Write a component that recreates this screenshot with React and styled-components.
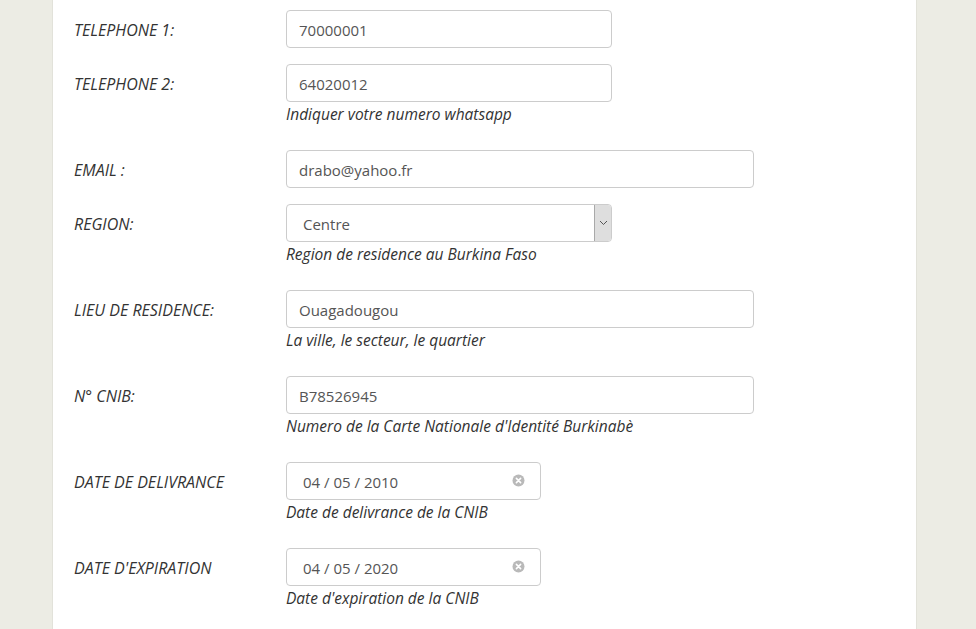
import styled, { createGlobalStyle } from "styled-components";

const GlobalStyle = createGlobalStyle`
  html, body {
    margin: 0;
    padding: 0;
    background: #ecece4;
    font-family: "Open Sans", "Noto Sans", sans-serif;
    font-size: 15px;
    color: #333;
  }
`;

const fields = [
  { label: "TELEPHONE 1:", value: "70000001", width: 326 },
  { label: "TELEPHONE 2:", value: "64020012", width: 326, help: "Indiquer votre numero whatsapp" },
  { label: "EMAIL :", value: "drabo@yahoo.fr", width: 468 },
  { label: "REGION:", value: "Centre", width: 326, kind: "select", help: "Region de residence au Burkina Faso" },
  { label: "LIEU DE RESIDENCE:", value: "Ouagadougou", width: 468, help: "La ville, le secteur, le quartier" },
  { label: "N° CNIB:", value: "B78526945", width: 468, help: "Numero de la Carte Nationale d'Identité Burkinabè" },
  { label: "DATE DE DELIVRANCE", value: "04 / 05 / 2010", width: 255, kind: "date", help: "Date de delivrance de la CNIB" },
  { label: "DATE D'EXPIRATION", value: "04 / 05 / 2020", width: 255, kind: "date", help: "Date d'expiration de la CNIB" },
];

function ClearIcon() {
  return (
    <svg width="13" height="13" viewBox="0 0 13 13">
      <circle cx="6.5" cy="6.5" r="6" fill="#b9b9b9" />
      <path d="M4.4 4.4 L8.6 8.6 M8.6 4.4 L4.4 8.6" stroke="#fff" strokeWidth="1.6" strokeLinecap="round" />
    </svg>
  );
}

function Chevron() {
  return (
    <svg width="9" height="6" viewBox="0 0 9 6">
      <path d="M1 1 L4.5 4.5 L8 1" fill="none" stroke="#555" strokeWidth="1" />
    </svg>
  );
}

function Control({ field }) {
  if (field.kind === "select") {
    return (
      <SelectBox $width={field.width}>
        <SelectText>{field.value}</SelectText>
        <ArrowButton>
          <Chevron />
        </ArrowButton>
      </SelectBox>
    );
  }
  if (field.kind === "date") {
    return (
      <DateBox $width={field.width}>
        <span>{field.value}</span>
        <ClearIcon />
      </DateBox>
    );
  }
  return <Input $width={field.width} defaultValue={field.value} readOnly />;
}

export default function App() {
  return (
    <>
      <GlobalStyle />
      <Page>
        <Panel>
          {fields.map((f) => (
            <FormGroup key={f.label}>
              <Label>{f.label}</Label>
              <Field>
                <Control field={f} />
                {f.help && <Help>{f.help}</Help>}
              </Field>
            </FormGroup>
          ))}
        </Panel>
      </Page>
    </>
  );
}

const Page = styled.div`
  min-height: 100vh;
  padding-left: 52px;
`;

const Panel = styled.div`
  width: 865px;
  min-height: 100vh;
  box-sizing: border-box;
  background: #fff;
  border-left: 1px solid #e2e2da;
  border-right: 1px solid #e2e2da;
  padding: 10px 0 0 21px;
`;

const FormGroup = styled.div`
  display: grid;
  grid-template-columns: 212px 1fr;
  margin-bottom: 16px;
`;

const Label = styled.div`
  height: 38px;
  padding-top: 2px;
  box-sizing: border-box;
  display: flex;
  align-items: center;
  font-style: italic;
  color: #333;
  font-size: 16px;
`;

const Field = styled.div`
  display: flex;
  flex-direction: column;
`;

const Input = styled.input`
  width: ${(p) => p.$width}px;
  height: 38px;
  box-sizing: border-box;
  border: 1px solid #ccc;
  border-radius: 4px;
  padding: 2px 12px 0;
  font-family: inherit;
  font-size: 15px;
  color: #555;
  background: #fff;
  outline: none;
`;

const SelectBox = styled.div`
  width: ${(p) => p.$width}px;
  height: 38px;
  box-sizing: border-box;
  border: 1px solid #ccc;
  border-radius: 4px;
  display: flex;
  align-items: stretch;
  color: #555;
  overflow: hidden;
`;

const SelectText = styled.div`
  flex: 1;
  display: flex;
  align-items: center;
  padding: 2px 0 0 16px;
`;

const ArrowButton = styled.div`
  width: 16px;
  background: #dedede;
  border-left: 1px solid #a9a9a9;
  display: flex;
  align-items: center;
  justify-content: center;
`;

const DateBox = styled.div`
  width: ${(p) => p.$width}px;
  height: 38px;
  box-sizing: border-box;
  border: 1px solid #ccc;
  border-radius: 4px;
  display: flex;
  align-items: center;
  justify-content: space-between;
  padding: 2px 15px 0 16px;
  color: #555;

  svg {
    margin-top: -4px;
  }
`;

const Help = styled.div`
  margin: 2px 0 10px;
  line-height: 20px;
  font-size: 15.5px;
  font-style: italic;
  color: #333;
`;
